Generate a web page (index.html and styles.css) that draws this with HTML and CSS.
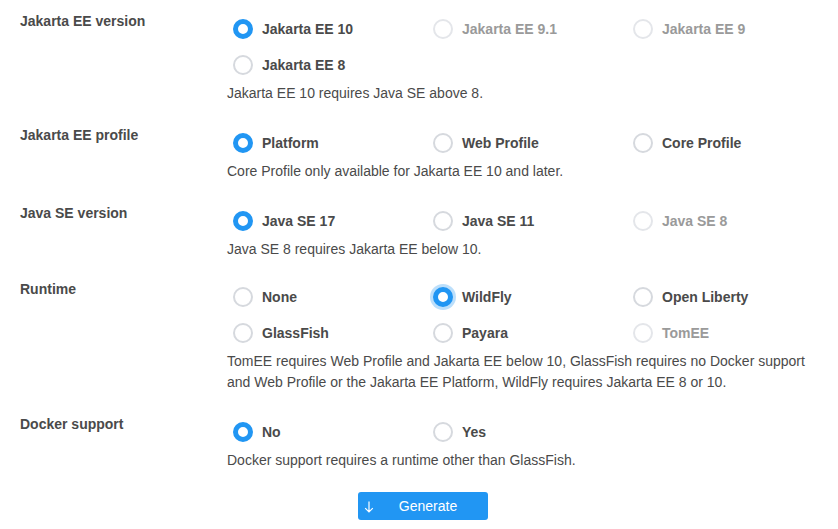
FILE: index.html
```html
<!DOCTYPE html>
<html>
<head>
<meta charset="utf-8">
<link rel="stylesheet" href="styles.css">
</head>
<body>
<div class="form">
  <div class="field">
    <div class="field-label">Jakarta EE version</div>
    <div class="field-body">
      <div class="options">
        <label class="option"><span class="radio checked"></span>Jakarta EE 10</label>
        <label class="option disabled"><span class="radio"></span>Jakarta EE 9.1</label>
        <label class="option disabled"><span class="radio"></span>Jakarta EE 9</label>
        <label class="option"><span class="radio"></span>Jakarta EE 8</label>
      </div>
      <p class="help">Jakarta EE 10 requires Java SE above 8.</p>
    </div>
  </div>
  <div class="field">
    <div class="field-label">Jakarta EE profile</div>
    <div class="field-body">
      <div class="options">
        <label class="option"><span class="radio checked"></span>Platform</label>
        <label class="option"><span class="radio"></span>Web Profile</label>
        <label class="option"><span class="radio"></span>Core Profile</label>
      </div>
      <p class="help">Core Profile only available for Jakarta EE 10 and later.</p>
    </div>
  </div>
  <div class="field field-tight">
    <div class="field-label">Java SE version</div>
    <div class="field-body">
      <div class="options">
        <label class="option"><span class="radio checked"></span>Java SE 17</label>
        <label class="option"><span class="radio"></span>Java SE 11</label>
        <label class="option disabled"><span class="radio"></span>Java SE 8</label>
      </div>
      <p class="help">Java SE 8 requires Jakarta EE below 10.</p>
    </div>
  </div>
  <div class="field">
    <div class="field-label">Runtime</div>
    <div class="field-body">
      <div class="options">
        <label class="option"><span class="radio"></span>None</label>
        <label class="option"><span class="radio checked focused"></span>WildFly</label>
        <label class="option"><span class="radio"></span>Open Liberty</label>
        <label class="option"><span class="radio"></span>GlassFish</label>
        <label class="option"><span class="radio"></span>Payara</label>
        <label class="option disabled"><span class="radio"></span>TomEE</label>
      </div>
      <p class="help">TomEE requires Web Profile and Jakarta EE below 10, GlassFish requires no Docker support and Web Profile or the Jakarta EE Platform, WildFly requires Jakarta EE 8 or 10.</p>
    </div>
  </div>
  <div class="field">
    <div class="field-label">Docker support</div>
    <div class="field-body">
      <div class="options">
        <label class="option"><span class="radio checked"></span>No</label>
        <label class="option"><span class="radio"></span>Yes</label>
      </div>
      <p class="help">Docker support requires a runtime other than GlassFish.</p>
    </div>
  </div>
  <div class="actions">
    <button class="button">
      <span class="button-icon"><svg width="10" height="12" viewBox="0 0 10 12"><path d="M5 0.5V11M1.2 7.2L5 11L8.8 7.2" fill="none" stroke="#fff" stroke-width="1.2"/></svg></span>
      <span class="button-text">Generate</span>
    </button>
  </div>
</div>
</body>
</html>
```
FILE: styles.css
```css
* { box-sizing: border-box; }
html, body { margin: 0; padding: 0; background: #fff; }
body {
  font-family: "Liberation Sans", Arial, sans-serif;
  font-size: 14px;
  color: #4a4a4a;
}
.form { padding: 11px 0 0 20px; }
.field {
  display: grid;
  grid-template-columns: 207px 1fr;
  margin-bottom: 21px;
}
.field.field-tight { margin-bottom: 19px; }
.field-label {
  font-weight: bold;
  line-height: 20px;
}
.options {
  display: grid;
  grid-template-columns: repeat(3, 200px);
  padding-left: 6px;
}
.option {
  display: flex;
  align-items: center;
  height: 36px;
  font-weight: bold;
  gap: 9px;
}
.option.disabled { color: #9a9a9a; }
.radio {
  width: 20px;
  height: 20px;
  border-radius: 50%;
  border: 2px solid #d6d9de;
  background: #fff;
  flex: none;
}
.option.disabled .radio { border-color: #e4e6ea; }
.radio.checked { border: 5.5px solid #2196f3; }
.radio.focused { box-shadow: 0 0 0 3px rgba(33, 150, 243, 0.3); }
.help {
  margin: 0;
  line-height: 21px;
  width: 590px;
}
.actions {
  display: flex;
  justify-content: center;
  padding-right: 12px;
}
.button {
  display: flex;
  align-items: center;
  width: 130px;
  height: 28px;
  padding: 0;
  border: none;
  border-radius: 3px;
  background: #2196f3;
  color: #fff;
  font-family: "Liberation Sans", Arial, sans-serif;
  font-size: 14px;
}
.button-icon { width: 22px; display: flex; justify-content: center; padding-top: 1px; }
.button-text { flex: 1; text-align: center; padding-right: 12px; }
```
